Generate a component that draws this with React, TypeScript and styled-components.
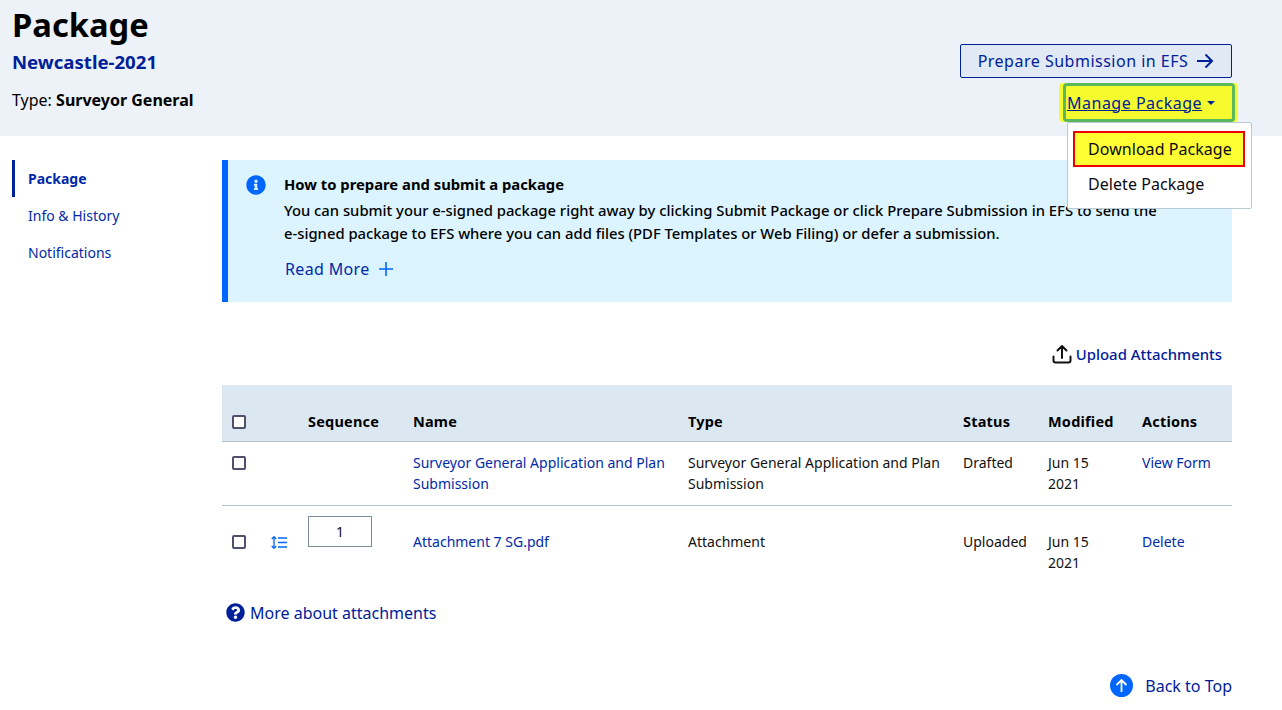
import * as React from "react";
import styled, { createGlobalStyle } from "styled-components";
import { FaInfoCircle, FaQuestionCircle } from "react-icons/fa";

const colors = {
  navy: "#00209a",
  link: "#002aa8",
  blue: "#0066ff",
  ink: "#000000",
  headerBg: "#edf2f9",
  alertBg: "#dcf4ff",
  tableHead: "#dce8f1",
  line: "#b4c3d0",
};

const GlobalStyle = createGlobalStyle`
  html, body { margin: 0; padding: 0; background: #fff; }
  body {
    font-family: "Noto Sans", "Open Sans", sans-serif;
    font-size: 14px;
    color: ${colors.ink};
  }
  * { box-sizing: border-box; }
`;

const Page = styled.div`
  width: 1282px;
  height: 710px;
  overflow: hidden;
  display: flex;
  flex-direction: column;
`;

const Header = styled.header`
  height: 136px;
  flex: none;
  background: ${colors.headerBg};
  padding: 0 50px 0 12px;
  display: flex;
  justify-content: space-between;
`;

const Title = styled.h1`
  margin: 0;
  padding-top: 3px;
  font-size: 32.7px;
  line-height: 44px;
  font-weight: 700;
`;

const SubTitle = styled.div`
  margin-top: 3px;
  font-size: 18.6px;
  line-height: 24px;
  font-weight: 700;
  color: ${colors.navy};
`;

const TypeLine = styled.div`
  margin-top: 15px;
  font-size: 16px;
  line-height: 22px;
  b { font-weight: 700; }
`;

const HeaderActions = styled.div`
  padding-top: 44px;
  display: flex;
  flex-direction: column;
  align-items: flex-end;
`;

const OutlineButton = styled.button`
  width: 272px;
  height: 34px;
  border: 1px solid ${colors.navy};
  border-radius: 2px;
  background: #e1eaf4;
  color: ${colors.navy};
  font: 400 16px/22px "Noto Sans", sans-serif;
  letter-spacing: 0.5px;
  display: flex;
  align-items: center;
  justify-content: center;
  gap: 8px;
  padding: 0;
`;

const MenuAnchor = styled.div`
  position: relative;
  margin-top: 5px;
  margin-right: -3px;
`;

const ManageButton = styled.button`
  width: 172px;
  height: 39px;
  background: #f5fb2d;
  border: 3px solid #5cb85c;
  box-shadow: -4px 0 0 #f5fb2d, 3px 0 0 #f5fb2d;
  border-radius: 4px;
  padding: 0 0 0 1px;
  display: flex;
  align-items: center;
  gap: 5px;
  color: ${colors.navy};
  font: 400 16px/22px "Noto Sans", sans-serif;
  letter-spacing: 0.5px;
  span { text-decoration: underline; }
  &::after {
    content: "";
    border-left: 4px solid transparent;
    border-right: 4px solid transparent;
    border-top: 4px solid ${colors.navy};
  }
`;

const Menu = styled.div`
  position: absolute;
  top: 39px;
  right: -17px;
  width: 185px;
  height: 87px;
  background: #fff;
  border: 1px solid #b8cad6;
  border-radius: 2px;
  padding: 8px 6px 8px 5px;
  display: flex;
  flex-direction: column;
  z-index: 5;
`;

const MenuItem = styled.div<{ $active?: boolean }>`
  height: ${(p) => (p.$active ? "36px" : "34px")};
  flex: none;
  padding-left: ${(p) => (p.$active ? "13px" : "15px")};
  display: flex;
  align-items: center;
  font-size: 16px;
  color: #0a0a14;
  background: ${(p) => (p.$active ? "#ffff33" : "transparent")};
  border: ${(p) => (p.$active ? "2px solid #f00000" : "none")};
  letter-spacing: 0.05px;
`;

const Body = styled.div`
  flex: 1;
  display: flex;
  padding: 24px 50px 0 12px;
`;

const Side = styled.nav`
  width: 210px;
  flex: none;
  display: flex;
  flex-direction: column;
`;

const SideItem = styled.a<{ $active?: boolean }>`
  height: 37px;
  display: flex;
  align-items: center;
  padding-left: ${(p) => (p.$active ? "13px" : "16px")};
  border-left: ${(p) => (p.$active ? `3px solid ${colors.navy}` : "none")};
  color: ${colors.link};
  font-size: 14px;
  font-weight: ${(p) => (p.$active ? 700 : 400)};
`;

const Main = styled.main`
  flex: 1;
  min-width: 0;
  display: flex;
  flex-direction: column;
`;

const Alert = styled.section`
  height: 142px;
  flex: none;
  background: ${colors.alertBg};
  border-left: 6px solid ${colors.blue};
  padding: 14px 40px 0 18px;
  display: flex;
  gap: 18px;
`;

const AlertIcon = styled.div`
  color: ${colors.blue};
  font-size: 20px;
  line-height: 0;
  padding-top: 1px;
`;

const AlertTitle = styled.div`
  font-size: 14.8px;
  line-height: 21px;
  font-weight: 700;
`;

const AlertText = styled.p`
  margin: 4px 0 0;
  font-size: 14.8px;
  line-height: 22.5px;
  font-weight: 500;
`;

const ReadMore = styled.a`
  margin-top: 14px;
  padding-left: 1px;
  display: flex;
  align-items: center;
  gap: 9px;
  color: ${colors.link};
  font-size: 16px;
  line-height: 22px;
  letter-spacing: 0.35px;
`;

const UploadRow = styled.div`
  margin-top: 39px;
  padding-right: 10px;
  display: flex;
  justify-content: flex-end;
  align-items: center;
  gap: 4px;
  height: 26px;
`;

const UploadLink = styled.a`
  color: ${colors.navy};
  font-size: 14.9px;
  font-weight: 500;
`;

const Table = styled.table`
  margin-top: 18px;
  width: 1010px;
  table-layout: fixed;
  border-collapse: collapse;
`;

const Th = styled.th`
  height: 56px;
  padding: 17px 0 0;
  background: ${colors.tableHead};
  border-bottom: 1px solid ${colors.line};
  text-align: left;
  vertical-align: middle;
  font-size: 14.5px;
  font-weight: 700;
  letter-spacing: 0.2px;
`;

const Td = styled.td<{ $top?: number }>`
  padding: ${(p) => p.$top ?? 10}px 16px 11px 0;
  vertical-align: top;
  font-size: 14px;
  line-height: 21px;
  color: #111;
`;

const DateCell = styled(Td)`
  padding-right: 30px;
`;

const Row = styled.tr`
  border-bottom: 1px solid ${colors.line};
  &:last-child { border-bottom: none; }
`;

const TableLink = styled.a`
  color: ${colors.link};
`;

const Check = styled.span`
  display: block;
  width: 14px;
  height: 14px;
  margin: 4px 0 0 10px;
  border: 2px solid #50506a;
  border-radius: 2px;
  background: #fff;
`;

const HeadCheck = styled(Check)`
  margin-top: 2px;
`;

const SeqInput = styled.div`
  width: 64px;
  height: 31px;
  border: 1px solid #7d8c9a;
  background: #fff;
  display: flex;
  align-items: center;
  justify-content: center;
  font-size: 14px;
`;

const ReorderGlyph = styled.svg`
  display: block;
  margin: 5px 0 0 1px;
`;

const HelpLink = styled.a`
  margin: 18px 0 0 4px;
  display: flex;
  align-items: center;
  gap: 5px;
  color: ${colors.navy};
  font-size: 16px;
  line-height: 22px;
  svg { font-size: 19px; }
`;

const BackToTop = styled.a`
  margin-top: 50px;
  display: flex;
  justify-content: flex-end;
  align-items: center;
  gap: 12px;
  color: ${colors.navy};
  font-size: 16px;
  line-height: 24px;
`;

const ArrowRightIcon = () => (
  <svg width="18" height="16" viewBox="0 0 18 16" fill="none" stroke={colors.navy} strokeWidth="2">
    <path d="M1 8h15M9.500 1.500 16 8l-6.500 6.500" />
  </svg>
);

const PlusIcon = () => (
  <svg width="14" height="14" viewBox="0 0 14 14" stroke={colors.blue} strokeWidth="1.600">
    <path d="M7 0v14M0 7h14" />
  </svg>
);

const UploadIcon = () => (
  <svg width="20" height="20" viewBox="0 0 20 20" fill="none" stroke="#111" strokeWidth="2" strokeLinecap="round" strokeLinejoin="round">
    <path d="M1.500 12.500v4a2 2 0 0 0 2 2h13a2 2 0 0 0 2-2v-4M10 14V2M5.500 6.500 10 2l4.500 4.500" />
  </svg>
);

const ReorderIcon = () => (
  <ReorderGlyph width="16" height="13" viewBox="0 0 16 13" fill="none" stroke={colors.blue} strokeWidth="1.300">
    <path d="M3 1v11" />
    <path d="M.8 3 3 .7 5.200 3M.8 10 3 12.300 5.200 10" />
    <path d="M7 2h9M7 6.500h9M7 11h9" />
  </ReorderGlyph>
);

const UpCircleIcon = () => (
  <svg width="23" height="23" viewBox="0 0 23 23">
    <circle cx="11.500" cy="11.500" r="11.500" fill={colors.blue} />
    <path d="M11.500 18V6M6.500 11l5-5 5 5" fill="none" stroke="#fff" strokeWidth="1.800" />
  </svg>
);

export default function App() {
  return (
    <Page>
      <GlobalStyle />
      <Header>
        <div>
          <Title>Package</Title>
          <SubTitle>Newcastle-2021</SubTitle>
          <TypeLine>
            Type: <b>Surveyor General</b>
          </TypeLine>
        </div>
        <HeaderActions>
          <OutlineButton>
            Prepare Submission in EFS <ArrowRightIcon />
          </OutlineButton>
          <MenuAnchor>
            <ManageButton>
              <span>Manage Package</span>
            </ManageButton>
            <Menu>
              <MenuItem $active>Download Package</MenuItem>
              <MenuItem>Delete Package</MenuItem>
            </Menu>
          </MenuAnchor>
        </HeaderActions>
      </Header>
      <Body>
        <Side>
          <SideItem $active>Package</SideItem>
          <SideItem>Info &amp; History</SideItem>
          <SideItem>Notifications</SideItem>
        </Side>
        <Main>
          <Alert>
            <AlertIcon>
              <FaInfoCircle />
            </AlertIcon>
            <div>
              <AlertTitle>How to prepare and submit a package</AlertTitle>
              <AlertText>
                You can submit your e-signed package right away by clicking Submit Package or click Prepare Submission in EFS to send the
                <br />
                e-signed package to EFS where you can add files (PDF Templates or Web Filing) or defer a submission.
              </AlertText>
              <ReadMore>
                Read More <PlusIcon />
              </ReadMore>
            </div>
          </Alert>
          <UploadRow>
            <UploadIcon />
            <UploadLink>Upload Attachments</UploadLink>
          </UploadRow>
          <Table>
            <colgroup>
              <col width="48" />
              <col width="38" />
              <col width="105" />
              <col width="275" />
              <col width="275" />
              <col width="85" />
              <col width="94" />
              <col width="90" />
            </colgroup>
            <thead>
              <tr>
                <Th>
                  <HeadCheck />
                </Th>
                <Th />
                <Th>Sequence</Th>
                <Th>Name</Th>
                <Th>Type</Th>
                <Th>Status</Th>
                <Th>Modified</Th>
                <Th>Actions</Th>
              </tr>
            </thead>
            <tbody>
              <Row>
                <Td>
                  <Check />
                </Td>
                <Td />
                <Td />
                <Td>
                  <TableLink>Surveyor General Application and Plan Submission</TableLink>
                </Td>
                <Td>Surveyor General Application and Plan Submission</Td>
                <Td>Drafted</Td>
                <DateCell>Jun 15 2021</DateCell>
                <Td>
                  <TableLink>View Form</TableLink>
                </Td>
              </Row>
              <Row>
                <Td $top={25}>
                  <Check />
                </Td>
                <Td $top={25}>
                  <ReorderIcon />
                </Td>
                <Td>
                  <SeqInput>1</SeqInput>
                </Td>
                <Td $top={25}>
                  <TableLink>Attachment 7 SG.pdf</TableLink>
                </Td>
                <Td $top={25}>Attachment</Td>
                <Td $top={25}>Uploaded</Td>
                <DateCell $top={25}>Jun 15 2021</DateCell>
                <Td $top={25}>
                  <TableLink>Delete</TableLink>
                </Td>
              </Row>
            </tbody>
          </Table>
          <HelpLink>
            <FaQuestionCircle />
            More about attachments
          </HelpLink>
          <BackToTop>
            <UpCircleIcon />
            Back to Top
          </BackToTop>
        </Main>
      </Body>
    </Page>
  );
}
